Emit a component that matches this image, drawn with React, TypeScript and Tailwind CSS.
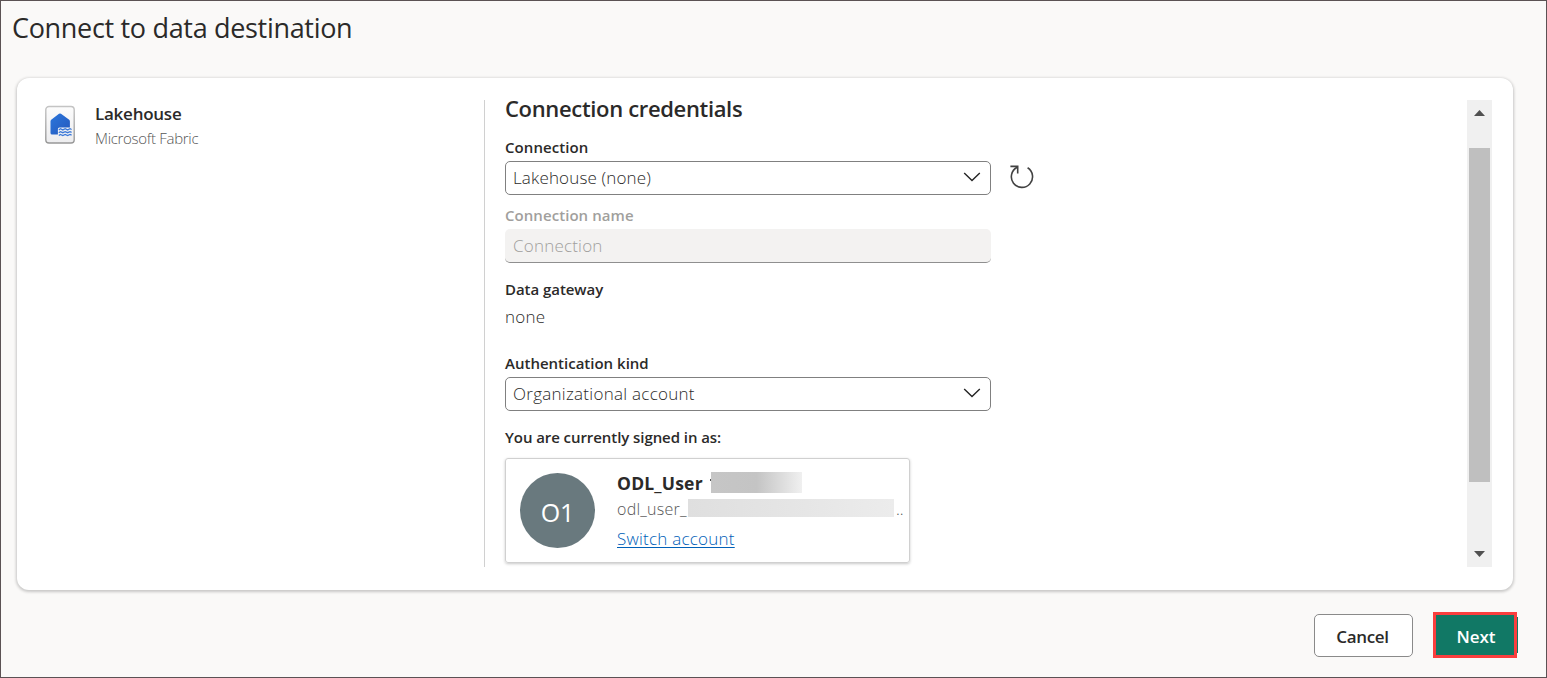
import React from "react";

function Chevron() {
  return (
    <svg className="-mt-[2px] h-[10px] w-[18px]" viewBox="0 0 18 10" fill="none" stroke="#242424" strokeWidth="1.4">
      <path d="M1.2 1 9 8.6 16.8 1" />
    </svg>
  );
}

function Select({ children }: { children: React.ReactNode }) {
  return (
    <div className="flex h-[34px] w-[486px] shrink-0 items-center justify-between rounded-[5px] border border-[#808080] bg-white pr-[9px] pl-[7px]">
      {children}
      <Chevron />
    </div>
  );
}

function LakehouseIcon() {
  return (
    <svg className="h-[40px] w-[32px]" viewBox="0 0 32 40">
      <defs>
        <linearGradient id="page" x1="0" y1="0" x2="0" y2="1">
          <stop offset="0" stopColor="#fcfcfc" />
          <stop offset="1" stopColor="#ededef" />
        </linearGradient>
        <linearGradient id="edge" x1="0" y1="0" x2="0" y2="1">
          <stop offset="0" stopColor="#c4c4c4" />
          <stop offset="1" stopColor="#979797" />
        </linearGradient>
        <linearGradient id="house" x1="0" y1="0" x2="1" y2="1">
          <stop offset="0" stopColor="#2c77dc" />
          <stop offset="1" stopColor="#2458bd" />
        </linearGradient>
      </defs>
      <rect x="1.8" y="1.5" width="28.4" height="36.5" rx="3.2" fill="url(#page)" stroke="url(#edge)" strokeWidth="1.4" />
      <path d="M6.5 16.2q0-.9.7-1.5L15 8.8q1-.7 2 0l8.2 5.9q.7.6.7 1.5v6.3H15.5q-1.6 0-1.6 1.5v5.5H8q-1.5 0-1.5-1.5z" fill="url(#house)" />
      <path d="M14.8 24.9l1.6-1.2 2.4 1.2 2.4-1.2 2.4 1.2 2.4-1.2 1.6.8M14.8 27.7l1.6-1 2.4 1 2.4-1 2.4 1 2.4-1 1.6.7M14.8 30.5l1.6-1 2.4 1 2.4-1 2.4 1 2.4-1 1.6.7" fill="none" stroke="#3a78d8" strokeWidth="1.3" />
    </svg>
  );
}

function RefreshIcon() {
  return (
    <svg className="h-[26px] w-[26px]" viewBox="0 0 26 26" fill="none" stroke="#424242" strokeWidth="1.6">
      <path d="M18.6 3.8A10.6 10.6 0 1 1 8.2 3.3" />
      <path d="M1.4 2.4H8.7V9.6" />
    </svg>
  );
}

export default function App() {
  return (
    <div className="flex h-[678px] w-[1547px] flex-col overflow-hidden border border-[#5b5254] bg-[#faf9f8] font-['Open_Sans',sans-serif] whitespace-nowrap text-[#2b2a29]">
      <h1 className="mt-[11px] ml-[11px] text-[27px] leading-[32px] font-medium tracking-[-0.32px]">Connect to data destination</h1>

      <main className="mt-[34px] ml-[16px] flex h-[512px] w-[1496px] shrink-0 rounded-[12px] bg-white pt-[22px] shadow-[0_1px_3px_1px_rgba(0,0,0,0.2)]">
        <section className="flex h-[467px] w-[468px] shrink-0 border-r border-[#d0d0d0] pl-[27px]">
          <div className="pt-[5px]"><LakehouseIcon /></div>
          <div className="ml-[19px] pt-[3px]">
            <div className="text-[17px] leading-[22px] font-semibold tracking-[-0.25px]">Lakehouse</div>
            <div className="mt-[2px] text-[15px] leading-[22px] font-light tracking-[-0.3px] text-[#555]">Microsoft Fabric</div>
          </div>
        </section>

        <section className="ml-[20px] flex w-[962px] shrink-0 flex-col">
          <h2 className="-mt-[5px] text-[22px] leading-[26px] font-semibold tracking-[-0.34px]">Connection credentials</h2>
          <div className="mt-[16px] text-[15px] leading-[20px] font-semibold tracking-[0.08px]">Connection</div>
          <div className="mt-[4px] flex">
            <Select><span className="text-[17px] leading-[22px] font-light tracking-[0.15px]">Lakehouse (none)</span></Select>
            <div className="ml-[18px] pt-[3px]"><RefreshIcon /></div>
          </div>
          <div className="mt-[10px] text-[15px] leading-[20px] font-semibold tracking-[0.06px] text-[#a19f9d]">Connection name</div>
          <div className="mt-[4px] flex h-[34px] w-[486px] shrink-0 items-center rounded-[5px] border-b border-[#8f8f8f] bg-[#f3f2f1] pl-[8px]">
            <span className="text-[17px] leading-[22px] font-light tracking-[0.2px] text-[#a19f9d]">Connection</span>
          </div>
          <div className="mt-[16px] text-[15px] leading-[20px] font-semibold tracking-[-0.05px]">Data gateway</div>
          <div className="mt-[7px] text-[17px] leading-[22px] font-light tracking-[0.2px]">none</div>
          <div className="mt-[25px] text-[15px] leading-[20px] font-semibold">Authentication kind</div>
          <div className="mt-[4px] flex">
            <Select><span className="text-[17px] leading-[22px] font-light tracking-[0.27px]">Organizational account</span></Select>
          </div>
          <div className="mt-[16px] text-[15px] leading-[20px] font-semibold tracking-[-0.07px]">You are currently signed in as:</div>
          <div className="mt-[11px] flex h-[105px] w-[405px] shrink-0 rounded-[3px] border border-[#d0d0d0] pt-[13px] pl-[14px] shadow-[0_1px_3px_rgba(0,0,0,0.22)]">
            <div className="mt-[1px] flex h-[75px] w-[75px] shrink-0 items-center justify-center rounded-full bg-[#69797e] pt-[3px] text-[25px] leading-[30px] text-white">O1</div>
            <div className="ml-[22px] flex flex-col">
              <div className="flex h-[22px] items-start">
                <span className="w-[93px] text-[17.5px] leading-[22px] font-bold tracking-[0.2px]">ODL_User</span>
                <span className="mt-[7px] h-[2px] w-[1px] bg-[#555]" />
                <span className="h-[21px] w-[91px] bg-linear-to-r from-[#c6c6c6] via-[#c4c4c4] to-[#f0f0f0]" />
              </div>
              <div className="mt-[4px] flex h-[22px] items-start">
                <span className="w-[71px] text-[16px] leading-[22px] font-light tracking-[0.25px] text-[#555]">odl_user_</span>
                <span className="mt-[1px] h-[18px] w-[206px] bg-linear-to-r from-[#dfdfdf] via-[#e5e5e5] to-[#ececec]" />
                <span className="ml-[2px] text-[16px] leading-[22px] font-light text-[#555]">..</span>
              </div>
              <a className="mt-[8px] text-[17px] leading-[22px] font-light tracking-[0.23px] text-[#0060b8] underline underline-offset-2">Switch account</a>
            </div>
          </div>
        </section>

        <div className="flex h-[467px] w-[25px] shrink-0 flex-col items-center bg-[#f0f0f0]">
          <svg className="mt-[10px] h-[6px] w-[11px]" viewBox="0 0 11 6"><path d="M0 6 5.5 0 11 6z" fill="#505050" /></svg>
          <div className="mt-[32px] h-[334px] w-[21px] bg-[#bfbfbf]" />
          <svg className="mt-[69px] h-[6px] w-[11px]" viewBox="0 0 11 6"><path d="M0 0 5.5 6 11 0z" fill="#505050" /></svg>
        </div>
      </main>

      <footer className="mt-[22px] flex justify-end pr-[28px]">
        <button className="mt-[2px] h-[43px] w-[99px] rounded-[5px] border border-[#8a8a8a] bg-white pt-[3px] pr-[2px] text-[17px] leading-[22px] font-semibold tracking-[-0.3px]">Cancel</button>
        <div className="ml-[20px] flex h-[46px] w-[85px] items-center">
          <button className="h-[46px] w-[84px] border-3 border-[#fa3e3e] bg-[#117865] pt-[3px] pl-[2px] text-[17px] leading-[22px] font-semibold text-white">Next</button>
          <span className="h-[36px] w-[1px] bg-[#117865]" />
        </div>
      </footer>
    </div>
  );
}
